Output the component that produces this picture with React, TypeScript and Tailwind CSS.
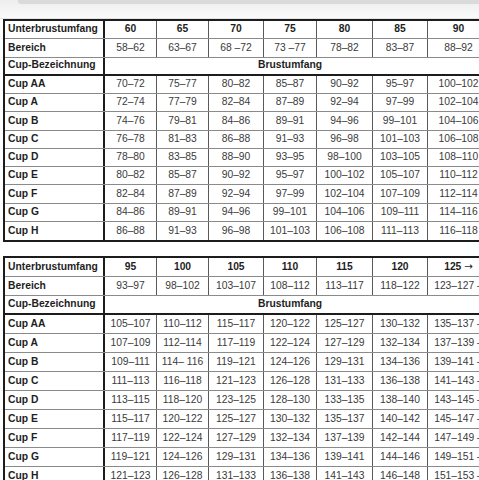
const WIDTHS = ["w-[52px]", "w-[52px]", "w-[55px]", "w-[53px]", "w-[56px]", "w-[55px]", "w-[62px]"];

const CUPS = ["AA", "A", "B", "C", "D", "E", "F", "G", "H"];

function range(a: number) {
  return `${a}–${a + 2}`;
}

type TableData = {
  sizes: React.ReactNode[];
  bereich: string[];
  rows: string[][];
  rowH: string;
};

function buildRows(offset: number, tail: string, quirk?: (i: number, j: number, v: string) => string) {
  return CUPS.map((_, i) =>
    Array.from({ length: 7 }, (_, j) => {
      let v = range(70 + 2 * i + 5 * (j + offset));
      if (quirk) v = quirk(i, j, v);
      return j === 6 ? v + tail : v;
    })
  );
}

const table1: TableData = {
  sizes: ["60", "65", "70", "75", "80", "85", "90"],
  bereich: ["58–62", "63–67", "68 –72", "73 –77", "78–82", "83–87", "88–92"],
  rows: buildRows(0, ""),
  rowH: "h-[18.25px]",
};

const table2: TableData = {
  sizes: [
    "95",
    "100",
    "105",
    "110",
    "115",
    "120",
    <span key="a">
      125 <span className="font-['DejaVu_Sans'] font-normal">→</span>
    </span>,
  ],
  bereich: ["93–97", "98–102", "103–107", "108–112", "113–117", "118–122", "123–127 –"],
  rows: buildRows(7, " –", (i, j, v) => (i === 2 && j === 1 ? "114– 116" : v)),
  rowH: "h-[19px]",
};

function Label({ children }: { children: React.ReactNode }) {
  return (
    <div className="w-[100px] shrink-0 h-full flex items-center pl-[3px] border-r-2 border-[#1c1c1c] text-[#1e1e1e] font-bold">
      {children}
    </div>
  );
}

function Row({
  label,
  cells,
  rowH,
  headBold = false,
  last = false,
}: {
  label: string;
  cells: React.ReactNode[];
  rowH: string;
  headBold?: boolean;
  last?: boolean;
}) {
  return (
    <div className={`flex ${rowH} ${last ? "" : "border-b border-[#8a8a8a]"}`}>
      <Label>{label}</Label>
      {cells.map((c, j) => (
        <div
          key={j}
          className={`${WIDTHS[j]} shrink-0 h-full flex items-center justify-center whitespace-nowrap border-r border-[#5a5a5a] ${
            headBold ? "font-bold text-[#1e1e1e]" : "text-[#3a3a3a]"
          }`}
        >
          {c}
        </div>
      ))}
    </div>
  );
}

function SizeTable({ data }: { data: TableData }) {
  return (
    <div className="ml-[3px] w-[489px] shrink-0 border-2 border-[#1c1c1c] bg-white">
      <Row label="Unterbrustumfang" cells={data.sizes} rowH={data.rowH} headBold />
      <Row label="Bereich" cells={data.bereich} rowH={data.rowH} />
      <div className={`flex ${data.rowH} border-b-2 border-[#1c1c1c]`}>
        <Label>Cup-Bezeichnung</Label>
        <div className="flex-1 h-full flex items-center justify-center pr-[15px] font-bold text-[#1e1e1e]">
          Brustumfang
        </div>
      </div>
      {data.rows.map((r, i) => (
        <Row key={i} label={`Cup ${CUPS[i]}`} cells={r} rowH={data.rowH} last={i === data.rows.length - 1} />
      ))}
    </div>
  );
}

export default function App() {
  return (
    <div
      className="w-[479px] h-[480px] overflow-hidden bg-white text-[10.3px] leading-none"
      style={{ fontFamily: '"Liberation Sans", Arial, sans-serif' }}
    >
      {/* browser-ish strip on top */}
      <div className="h-[19px] border-b border-[#e3e3e3] bg-gradient-to-b from-[#eeeeee] to-[#fafafa] relative">
        <div className="absolute left-[18px] right-0 top-0 h-[4px] bg-[#dadada] rounded-bl-[3px]" />
      </div>
      <SizeTable data={table1} />
      <div className="mt-[14px]">
        <SizeTable data={table2} />
      </div>
    </div>
  );
}
